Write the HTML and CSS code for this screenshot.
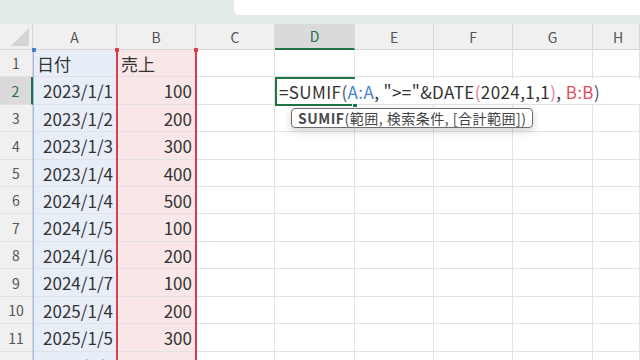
FILE: index.html
```html
<!DOCTYPE html>
<html lang="ja">
<head>
    <meta charset="UTF-8">
    <meta name="viewport" content="width=device-width, initial-scale=1.0">
    <title>SUMIF</title>
    <link rel="stylesheet" href="styles.css">
</head>
<body>
    <div class="topbar">
        <div class="namebox"></div>
    </div>

    <div class="sheet">
        <!-- column headers -->
        <div class="corner">
            <svg width="33" height="26" viewBox="0 0 33 26"><polygon points="29,4 29,22 11,22" fill="#d4d4d4"/></svg>
        </div>
        <div class="col-head">A</div>
        <div class="col-head">B</div>
        <div class="col-head">C</div>
        <div class="col-head active">D</div>
        <div class="col-head">E</div>
        <div class="col-head">F</div>
        <div class="col-head">G</div>
        <div class="col-head last">H</div>

        <div class="row-head">1</div>
        <div class="cell col-a">日付</div><div class="cell col-b">売上</div><div class="cell"></div><div class="cell"></div><div class="cell"></div><div class="cell"></div><div class="cell"></div><div class="cell"></div>

        <div class="row-head active">2</div>
        <div class="cell col-a num">2023/1/1</div><div class="cell col-b num">100</div><div class="cell"></div><div class="cell"></div><div class="cell"></div><div class="cell"></div><div class="cell"></div><div class="cell"></div>

        <div class="row-head">3</div>
        <div class="cell col-a num">2023/1/2</div><div class="cell col-b num">200</div><div class="cell"></div><div class="cell"></div><div class="cell"></div><div class="cell"></div><div class="cell"></div><div class="cell"></div>

        <div class="row-head">4</div>
        <div class="cell col-a num">2023/1/3</div><div class="cell col-b num">300</div><div class="cell"></div><div class="cell"></div><div class="cell"></div><div class="cell"></div><div class="cell"></div><div class="cell"></div>

        <div class="row-head">5</div>
        <div class="cell col-a num">2023/1/4</div><div class="cell col-b num">400</div><div class="cell"></div><div class="cell"></div><div class="cell"></div><div class="cell"></div><div class="cell"></div><div class="cell"></div>

        <div class="row-head">6</div>
        <div class="cell col-a num">2024/1/4</div><div class="cell col-b num">500</div><div class="cell"></div><div class="cell"></div><div class="cell"></div><div class="cell"></div><div class="cell"></div><div class="cell"></div>

        <div class="row-head">7</div>
        <div class="cell col-a num">2024/1/5</div><div class="cell col-b num">100</div><div class="cell"></div><div class="cell"></div><div class="cell"></div><div class="cell"></div><div class="cell"></div><div class="cell"></div>

        <div class="row-head">8</div>
        <div class="cell col-a num">2024/1/6</div><div class="cell col-b num">200</div><div class="cell"></div><div class="cell"></div><div class="cell"></div><div class="cell"></div><div class="cell"></div><div class="cell"></div>

        <div class="row-head">9</div>
        <div class="cell col-a num">2024/1/7</div><div class="cell col-b num">100</div><div class="cell"></div><div class="cell"></div><div class="cell"></div><div class="cell"></div><div class="cell"></div><div class="cell"></div>

        <div class="row-head">10</div>
        <div class="cell col-a num">2025/1/4</div><div class="cell col-b num">200</div><div class="cell"></div><div class="cell"></div><div class="cell"></div><div class="cell"></div><div class="cell"></div><div class="cell"></div>

        <div class="row-head">11</div>
        <div class="cell col-a num">2025/1/5</div><div class="cell col-b num">300</div><div class="cell"></div><div class="cell"></div><div class="cell"></div><div class="cell"></div><div class="cell"></div><div class="cell"></div>

        <div class="row-head">12</div>
        <div class="cell col-a num">2025/1/6</div><div class="cell col-b num">400</div><div class="cell"></div><div class="cell"></div><div class="cell"></div><div class="cell"></div><div class="cell"></div><div class="cell"></div>

        <!-- formula reference ranges -->
        <div class="range range-a"><span class="handle tl"></span></div>
        <div class="range range-b"><span class="handle tl"></span><span class="handle tr"></span></div>

        <!-- active cell D2 in edit mode -->
        <div class="active-cell"><span class="fill-handle"></span></div>
        <div class="editor">=SUMIF<span class="p-outer">(</span><span class="ref-a">A:A</span>, "&gt;="&amp;DATE<span class="p-inner">(</span>2024,1,1<span class="p-inner">)</span>, <span class="ref-b">B:B</span><span class="p-outer">)</span></div>
        <div class="tip"><b>SUMIF</b>(範囲, 検索条件, [合計範囲])</div>
    </div>
</body>
</html>
```

FILE: styles.css
```css
* {
    margin: 0;
    padding: 0;
    box-sizing: border-box;
}

body {
    font-family: "Noto Sans CJK JP", "Noto Sans", sans-serif;
    color: #333;
    background: #fff;
    width: 640px;
    height: 360px;
    overflow: hidden;
}

.topbar {
    height: 24px;
    background: #e2eaea;
}

.namebox {
    margin-left: 234px;
    height: 15px;
    background: #fff;
    border-bottom-left-radius: 5px;
}

.sheet {
    position: relative;
    display: grid;
    grid-template-columns: 33px 84px 79px 79px 80px 79px 79px 80px 1fr;
    grid-template-rows: 26px 27px 28px 27px 28px 27px 27px 28px 27px 28px 27px 28px 28px;
}

/* headers */
.corner {
    background: #f0f0f0;
    border-right: 1px solid #d6d6d6;
    border-bottom: 1px solid #d6d6d6;
}

.corner svg {
    display: block;
}

.col-head {
    background: #f0f0f0;
    border-right: 1px solid #dadada;
    border-bottom: 1px solid #d6d6d6;
    display: flex;
    align-items: center;
    justify-content: center;
    font-size: 14px;
    color: #555;
}

.col-head.last {
    justify-content: flex-start;
    padding-left: 20px;
}

.col-head.active {
    background: #dadada;
    color: #217346;
    border-bottom: 2px solid #217346;
}

.row-head {
    background: #f0f0f0;
    border-right: 1px solid #d6d6d6;
    border-bottom: 1px solid #e0e0e0;
    display: flex;
    align-items: center;
    justify-content: center;
    font-size: 14px;
    color: #555;
}

.row-head.active {
    background: #dadada;
    color: #217346;
    border-right: 2px solid #217346;
}

/* cells */
.cell {
    border-right: 1px solid #e2e2e2;
    border-bottom: 1px solid #e2e2e2;
    display: flex;
    align-items: center;
    padding: 0 4px;
    font-size: 17px;
    white-space: nowrap;
    overflow: hidden;
}

.cell.num {
    justify-content: flex-end;
    padding-right: 3px;
}

.col-a {
    background: #e8eef8;
}

.col-b {
    background: #f9e7e7;
}

/* reference ranges */
.range {
    position: absolute;
    top: 26px;
    bottom: -40px;
}

.range-a {
    left: 33px;
    width: 84px;
    border-left: 1px solid #9fbbe6;
}

.range-b {
    left: 116px;
    width: 81px;
    border-left: 2px solid #d6404c;
    border-right: 2px solid #d6404c;
}

.handle {
    position: absolute;
    top: -2px;
    width: 4px;
    height: 4px;
}

.range-a .handle {
    left: -2px;
    background: #4a7fd0;
}

.range-b .handle {
    background: #d6404c;
}

.range-b .tl {
    left: -3px;
}

.range-b .tr {
    right: -3px;
}

/* active cell + in-cell editor */
.active-cell {
    position: absolute;
    left: 275px;
    top: 53px;
    width: 80px;
    height: 29px;
    border: 2px solid #217346;
    border-right: none;
}

.fill-handle {
    position: absolute;
    right: -3px;
    bottom: -4px;
    width: 6px;
    height: 6px;
    background: #217346;
    border: 1px solid #fff;
}

.editor {
    position: absolute;
    left: 277px;
    right: 0;
    top: 55px;
    height: 25px;
    background: #fff;
    padding-left: 2px;
    font-size: 17px;
    letter-spacing: 0.4px;
    line-height: 25px;
    white-space: nowrap;
    color: #333;
}

.ref-a {
    color: #4a7fd0;
}

.ref-b {
    color: #e0505a;
}

.p-outer {
    color: #46557a;
}

.p-inner {
    color: #e8808a;
}

.tip {
    position: absolute;
    left: 291px;
    top: 84px;
    height: 20px;
    padding: 0 6px;
    background: #fff;
    border: 1px solid #6e6e6e;
    border-radius: 4px;
    box-shadow: 0 3px 8px rgba(0, 0, 0, 0.18);
    font-size: 14px;
    letter-spacing: 0.5px;
    line-height: 18px;
    color: #444;
    white-space: nowrap;
}

.tip b {
    color: #4a4a4a;
}
```
